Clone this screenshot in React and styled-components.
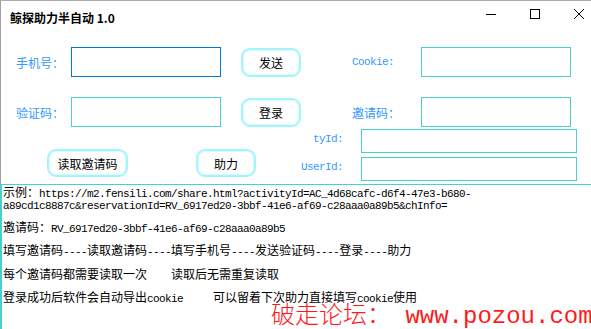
import React from 'react'
import styled, { createGlobalStyle } from 'styled-components'

const GlobalStyle = createGlobalStyle`
  html, body {
    margin: 0;
    padding: 0;
    background: #fff;
  }
  body {
    width: 591px;
    height: 329px;
    overflow: hidden;
    font-family: "Noto Sans CJK SC", "Liberation Sans", sans-serif;
  }
`

const Window = styled.div`
  position: relative;
  width: 591px;
  height: 329px;
  display: flex;
  flex-direction: column;
  border-top: 1px solid #ababab;
  box-sizing: border-box;
  background: #fff;
  overflow: hidden;
`

const TitleBar = styled.div`
  height: 30px;
  display: flex;
  align-items: center;
  justify-content: space-between;
  border-left: 1px solid #a0a0a0;
  padding: 0 7px 0 9px;
  box-sizing: border-box;
`

const Title = styled.div`
  font-size: 12px;
  font-weight: 700;
  color: #000;
  margin-top: 2px;
`

const Controls = styled.div`
  display: flex;
  align-items: center;
  gap: 34px;
  margin-top: -4px;
`

const Ctrl = styled.svg`
  width: 10px;
  height: 10px;
  display: block;
`

const Form = styled.div`
  border-left: 1px solid #a0a0a0;
  padding: 16px 0 3px 0;
  display: flex;
  flex-direction: column;
`

const Row = styled.div`
  display: flex;
  align-items: center;
  height: 30px;
  margin-top: ${p => p.$top || 0}px;
`

const Label = styled.span`
  display: block;
  box-sizing: border-box;
  width: ${p => p.$w}px;
  margin-left: ${p => p.$left || 0}px;
  color: #3399ff;
  font-size: 12px;
  white-space: nowrap;
  text-align: ${p => (p.$right ? 'right' : 'left')};
  font-family: ${p => (p.$mono ? '"Liberation Mono", monospace' : '"Noto Sans CJK SC", sans-serif')};
  ${p => p.$mono && 'font-size: 11px; letter-spacing: -0.6px;'}
`

const Field = styled.div`
  box-sizing: border-box;
  width: ${p => p.$w}px;
  height: ${p => p.$h || 30}px;
  border: 1px solid ${p => (p.$focus ? '#0078d7' : '#48d1cc')};
  background: #fff;
  margin-left: ${p => p.$left || 0}px;
`

const Btn = styled.div`
  box-sizing: border-box;
  width: ${p => p.$w}px;
  height: ${p => p.$h || 29}px;
  margin-left: ${p => p.$left || 0}px;
  border: 2px solid #a4f5fb;
  box-shadow: inset 0 0 0 1px #d9fdff;
  border-radius: 9px;
  background: #fff;
  display: flex;
  align-items: center;
  justify-content: center;
  font-size: 12px;
  color: #000;
`

const Bottom = styled.div`
  display: flex;
  margin-top: 2px;
`

const BtnGroup = styled.div`
  width: 300px;
  display: flex;
  align-items: flex-start;
  padding: 20px 0 0 46px;
  box-sizing: border-box;
`

const IdGroup = styled.div`
  display: flex;
  flex-direction: column;
  gap: 4px;
`

const IdRow = styled.div`
  display: flex;
  align-items: flex-start;
  ${Label} {
    padding-top: 4px;
  }
`

const Output = styled.div`
  flex: 1;
  border-top: 1px solid #48d1cc;
  border-left: 2px solid #48d1cc;
  padding: 1px 0 0 1px;
  color: #000;
  font-size: 12px;
`

const Line = styled.div`
  height: 11.67px;
  line-height: 11.67px;
  white-space: pre;
`

const Mono = styled.span`
  font-family: "Liberation Mono", monospace;
  font-size: 11px;
  letter-spacing: -0.6px;
`

const Watermark = styled.div`
  position: absolute;
  left: 271px;
  top: 304px;
  color: #ff1a1a;
  font-size: 24px;
  line-height: 24px;
  white-space: pre;
  font-family: "Liberation Mono", "Noto Sans CJK SC", monospace;
  font-weight: 300;
`

const mixed = text =>
  text.split(/([\x00-\x7F]+)/).map((part, i) =>
    i % 2 ? <Mono key={i}>{part}</Mono> : part
  )

const lines = [
  '示例：https://m2.fensili.com/share.html?activityId=AC_4d68cafc-d6f4-47e3-b680-',
  'a89cd1c8887c&reservationId=RV_6917ed20-3bbf-41e6-af69-c28aaa0a89b5&chInfo=',
  '',
  '邀请码：RV_6917ed20-3bbf-41e6-af69-c28aaa0a89b5',
  '',
  '填写邀请码----读取邀请码----填写手机号----发送验证码----登录----助力',
  '',
  '每个邀请码都需要读取一次    读取后无需重复读取',
  '',
  '登录成功后软件会自动导出cookie     可以留着下次助力直接填写cookie使用',
]

export default function App() {
  return (
    <>
      <GlobalStyle />
      <Window>
        <TitleBar>
          <Title>鲸探助力半自动 1.0</Title>
          <Controls>
            <Ctrl viewBox="0 0 10 10">
              <path d="M0 5.5h10" stroke="#000" strokeWidth="1" />
            </Ctrl>
            <Ctrl viewBox="0 0 10 10">
              <rect x="0.5" y="0.5" width="9" height="9" fill="none" stroke="#000" strokeWidth="1" />
            </Ctrl>
            <Ctrl viewBox="0 0 10 10">
              <path d="M0 0L10 10M10 0L0 10" stroke="#000" strokeWidth="1" />
            </Ctrl>
          </Controls>
        </TitleBar>

        <Form>
          <Row>
            <Label $w={55} $left={15}>手机号：</Label>
            <Field $w={150} $focus />
            <Btn $w={60} $left={20}>发送</Btn>
            <Label $w={69} $left={51} $mono>Cookie:</Label>
            <Field $w={150} />
          </Row>
          <Row $top={20}>
            <Label $w={55} $left={15}>验证码：</Label>
            <Field $w={150} />
            <Btn $w={60} $left={20}>登录</Btn>
            <Label $w={69} $left={51}>邀请码：</Label>
            <Field $w={150} />
          </Row>
          <Bottom>
            <BtnGroup>
              <Btn $w={81} $h={28}>读取邀请码</Btn>
              <Btn $w={60} $h={28} $left={68}>助力</Btn>
            </BtnGroup>
            <IdGroup>
              <IdRow>
                <Label $w={42} $right $mono>tyId:</Label>
                <Field $w={216} $h={24} $left={18} />
              </IdRow>
              <IdRow>
                <Label $w={42} $right $mono>UserId:</Label>
                <Field $w={216} $h={24} $left={18} />
              </IdRow>
            </IdGroup>
          </Bottom>
        </Form>

        <Output>
          {lines.map((l, i) => (
            <Line key={i}>{l ? mixed(l) : ' '}</Line>
          ))}
        </Output>

        <Watermark>破走论坛： www.pozou.com</Watermark>
      </Window>
    </>
  )
}
